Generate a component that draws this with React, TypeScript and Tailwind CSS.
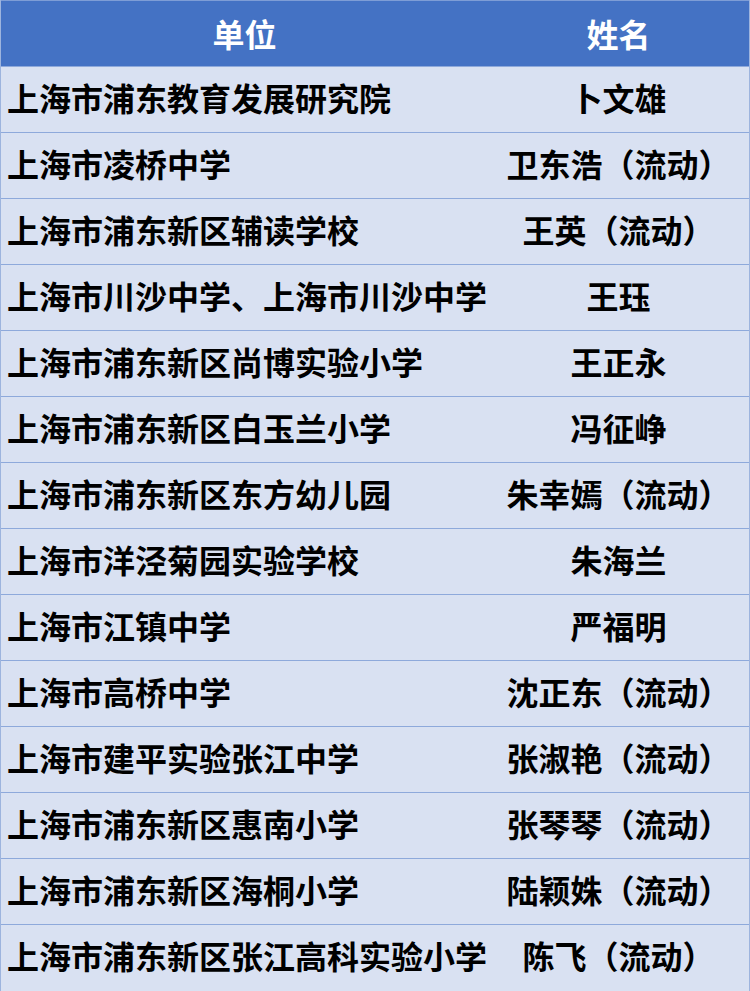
import React from "react";

const rows: [string, string][] = [
  ["上海市浦东教育发展研究院", "卜文雄"],
  ["上海市凌桥中学", "卫东浩（流动）"],
  ["上海市浦东新区辅读学校", "王英（流动）"],
  ["上海市川沙中学、上海市川沙中学东校", "王珏"],
  ["上海市浦东新区尚博实验小学", "王正永"],
  ["上海市浦东新区白玉兰小学", "冯征峥"],
  ["上海市浦东新区东方幼儿园", "朱幸嫣（流动）"],
  ["上海市洋泾菊园实验学校", "朱海兰"],
  ["上海市江镇中学", "严福明"],
  ["上海市高桥中学", "沈正东（流动）"],
  ["上海市建平实验张江中学", "张淑艳（流动）"],
  ["上海市浦东新区惠南小学", "张琴琴（流动）"],
  ["上海市浦东新区海桐小学", "陆颖姝（流动）"],
  ["上海市浦东新区张江高科实验小学", "陈飞（流动）"],
];

export default function App() {
  return (
    <div
      className="w-[750px] h-[991px] bg-[#D9E1F2] border-x border-[#9DB4DE] overflow-hidden"
      style={{ fontFamily: '"Noto Sans CJK SC", "Noto Sans", sans-serif' }}
    >
      <div className="grid grid-cols-[487px_1fr] h-[66px] bg-[#4472C4] border-t border-[#7E9DD6] text-white font-bold text-[32px] leading-[64px] pb-[3px]">
        <div className="text-center">单位</div>
        <div className="text-center">姓名</div>
      </div>
      {rows.map(([unit, name], i) => (
        <div
          key={i}
          className="grid grid-cols-[487px_1fr] h-[66px] border-t border-[#8EA9DB] text-black font-bold text-[32px] leading-[60px]"
        >
          <div className="pl-[6px] whitespace-nowrap overflow-hidden">{unit}</div>
          <div className="text-center whitespace-nowrap">{name}</div>
        </div>
      ))}
    </div>
  );
}
